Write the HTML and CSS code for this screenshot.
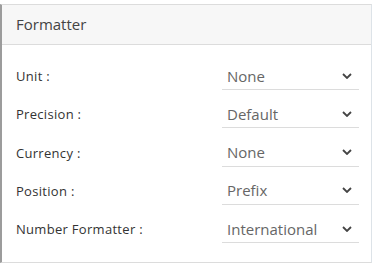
FILE: index.html
```html
<!DOCTYPE html>
<html lang="en">
<head>
    <meta charset="UTF-8">
    <meta name="viewport" content="width=device-width, initial-scale=1.0">
    <title>Formatter</title>
    <link rel="stylesheet" href="styles.css">
</head>
<body>
    <div class="panel">
        <div class="panel-header">Formatter</div>
        <div class="panel-body">
            <div class="row">
                <label>Unit :</label>
                <div class="select"><span>None</span><svg class="chevron" viewBox="0 0 10 6"><path d="M1 1 L5 5 L9 1"/></svg></div>
            </div>
            <div class="row">
                <label>Precision :</label>
                <div class="select"><span>Default</span><svg class="chevron" viewBox="0 0 10 6"><path d="M1 1 L5 5 L9 1"/></svg></div>
            </div>
            <div class="row">
                <label>Currency :</label>
                <div class="select"><span>None</span><svg class="chevron" viewBox="0 0 10 6"><path d="M1 1 L5 5 L9 1"/></svg></div>
            </div>
            <div class="row">
                <label>Position :</label>
                <div class="select"><span>Prefix</span><svg class="chevron" viewBox="0 0 10 6"><path d="M1 1 L5 5 L9 1"/></svg></div>
            </div>
            <div class="row">
                <label>Number Formatter :</label>
                <div class="select"><span>International</span><svg class="chevron" viewBox="0 0 10 6"><path d="M1 1 L5 5 L9 1"/></svg></div>
            </div>
        </div>
    </div>
</body>
</html>
```

FILE: styles.css
```css
body {
    margin: 0;
    padding: 0;
    font-family: "Open Sans", "Noto Sans", sans-serif;
    background-color: #fff;
}
.panel {
    margin-top: 4px;
    height: 257px;
    border: 1px solid #dcdcdc;
    border-left: 2px solid #9c9c9c;
    border-right-color: #dde3e8;
    background-color: #fff;
}
.panel-header {
    height: 39px;
    line-height: 39px;
    padding-left: 14px;
    background-color: #f7f7f7;
    border-bottom: 1px solid #dcdcdc;
    font-size: 15px;
    color: #444;
}
.panel-body {
    padding: 12px 12px 0 14px;
}
.row {
    display: flex;
    justify-content: space-between;
    align-items: center;
    height: 38.25px;
}
.row label {
    font-size: 13px;
    letter-spacing: 0.3px;
    color: #333;
}
.select {
    width: 137px;
    height: 28px;
    box-sizing: border-box;
    display: flex;
    align-items: center;
    justify-content: space-between;
    padding: 0 7px 0 5px;
    border-bottom: 1px solid #dcdcdc;
    font-size: 15px;
    color: #666;
}
.chevron {
    width: 10px;
    height: 6px;
    fill: none;
    stroke: #444;
    stroke-width: 1.8;
}
```
